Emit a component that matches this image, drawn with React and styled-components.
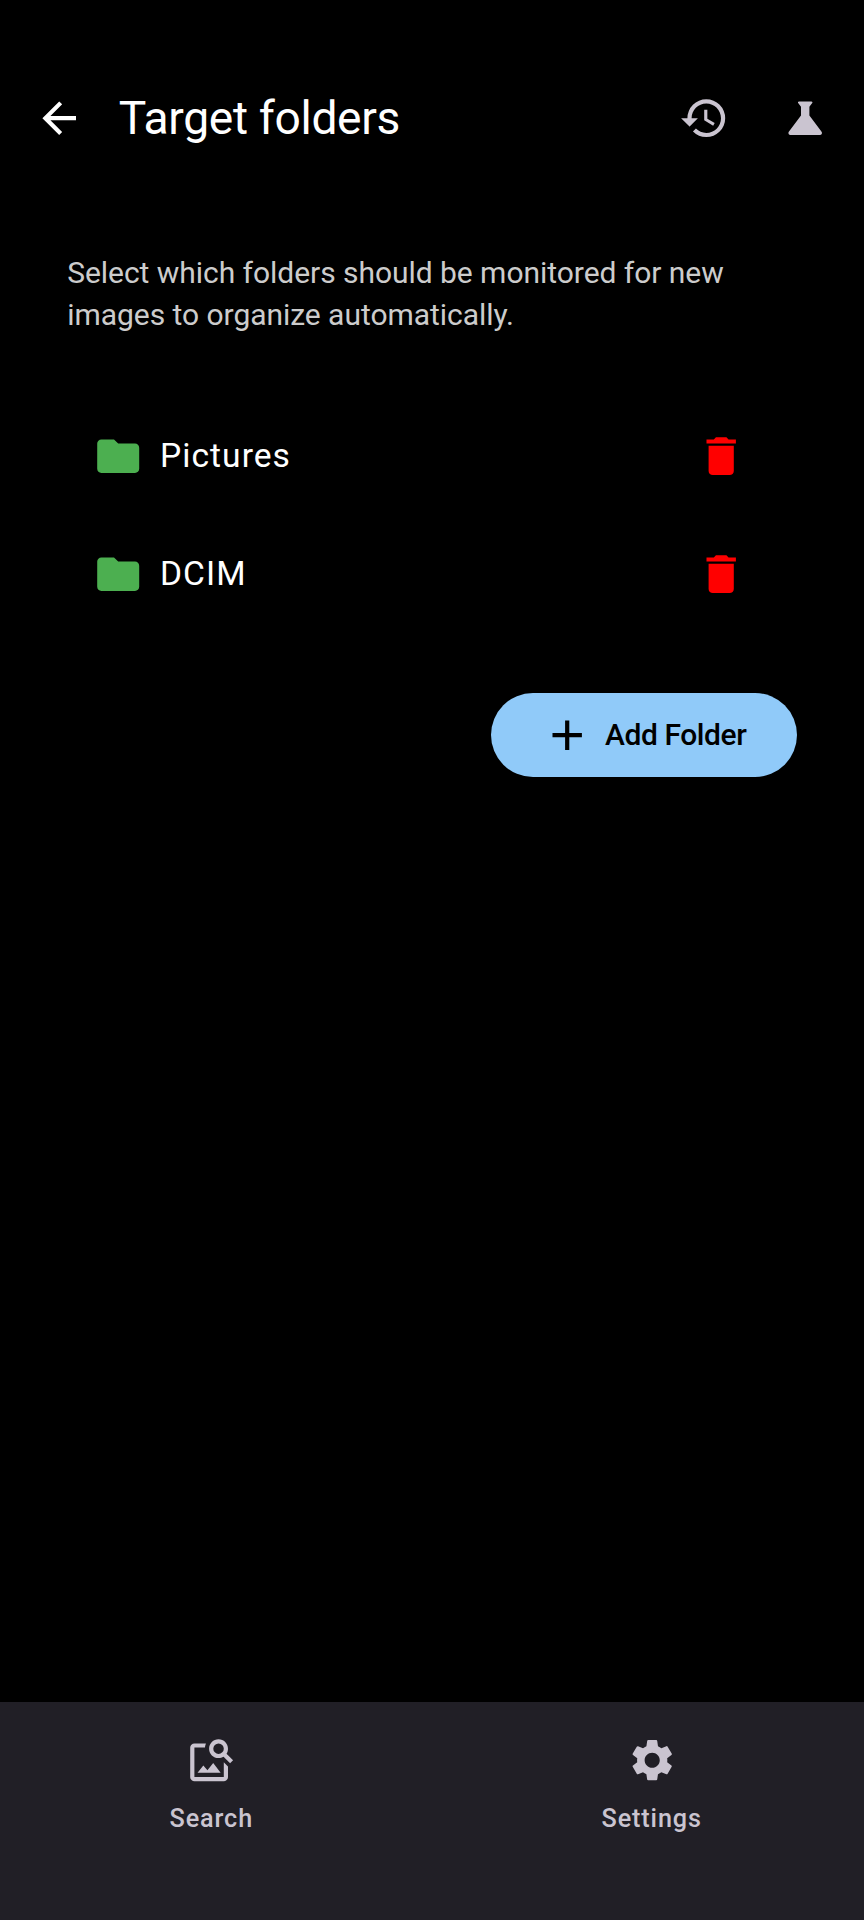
import React from 'react';
import styled, { createGlobalStyle } from 'styled-components';
import {
  MdArrowBack, MdHistory, MdScience, MdFolder, MdDelete, MdAdd, MdImageSearch, MdSettings,
} from 'react-icons/md';

const GlobalStyle = createGlobalStyle`
  * { box-sizing: border-box; }
  body { margin: 0; background: #000; font-family: Roboto, sans-serif; }
  button { font: inherit; border: 0; background: none; padding: 0; margin: 0; color: inherit; }
  svg { display: block; width: 50.4px; height: 50.4px; flex: none; }
`;

const Screen = styled.div`
  display: flex;
  flex-direction: column;
  width: 864px;
  height: 1920px;
  background: #000;
  color: #fff;
`;

const TopBar = styled.header`
  display: flex;
  align-items: center;
  height: 134.4px;
  margin-top: 50.8px;
  padding: 0 8.4px 0 9px;
`;

const IconButton = styled.button`
  display: flex;
  align-items: center;
  justify-content: center;
  width: 100.8px;
  height: 100.8px;
  color: ${({ $color }) => $color || '#fff'};
`;

const Title = styled.h1`
  flex: 1;
  margin: 0 0 0 9px;
  font-size: 46.2px;
  line-height: 58.8px;
  font-weight: 400;
  letter-spacing: -0.34px;
`;

const Content = styled.main`
  flex: 1;
  display: flex;
  flex-direction: column;
  padding: 67px 67.2px 0;
`;

const Description = styled.p`
  margin: 0;
  font-size: 30px;
  line-height: 42px;
  letter-spacing: -0.04px;
  color: #ccc;
`;

const FolderList = styled.ul`
  list-style: none;
  margin: 61.2px 0 0;
  padding: 0;
`;

const FolderRow = styled.li`
  display: flex;
  align-items: center;
  height: 118.2px;
  padding: 0 25.2px 0 26px;
  color: #4caf50;
`;

const FolderName = styled.span`
  flex: 1;
  margin-left: 16.4px;
  font-size: 33.6px;
  line-height: 50.4px;
  letter-spacing: 1.05px;
  color: #fff;
`;

const AddButton = styled.button`
  align-self: flex-end;
  display: flex;
  align-items: center;
  gap: 12.6px;
  height: 84px;
  margin-top: 59px;
  padding: 0 50.4px 0 51px;
  border-radius: 42px;
  background: #90caf9;
  color: #000;
  font-size: 30px;
  font-weight: 500;
  letter-spacing: -0.42px;
`;

const BottomNav = styled.nav`
  display: flex;
  gap: 16.8px;
  height: 218px;
  background: #211f26;
`;

const NavItem = styled.button`
  flex: 1;
  display: flex;
  flex-direction: column;
  align-items: center;
  gap: 16.8px;
  padding: 32.8px 1px 0 0;
  color: #cac4d0;
  font-size: 25.2px;
  line-height: 33.6px;
  font-weight: 500;
  letter-spacing: 0.9px;
`;

const folders = ['Pictures', 'DCIM'];

export default function App() {
  return (
    <Screen>
      <GlobalStyle />
      <TopBar>
        <IconButton aria-label="Back"><MdArrowBack /></IconButton>
        <Title>Target folders</Title>
        <IconButton $color="#cac4d0" aria-label="History"><MdHistory /></IconButton>
        <IconButton $color="#cac4d0" aria-label="Experiments"><MdScience /></IconButton>
      </TopBar>
      <Content>
        <Description>
          Select which folders should be monitored for new images to organize automatically.
        </Description>
        <FolderList>
          {folders.map((name) => (
            <FolderRow key={name}>
              <MdFolder />
              <FolderName>{name}</FolderName>
              <IconButton $color="#f00" aria-label={`Remove ${name}`}><MdDelete /></IconButton>
            </FolderRow>
          ))}
        </FolderList>
        <AddButton><MdAdd />Add Folder</AddButton>
      </Content>
      <BottomNav>
        <NavItem><MdImageSearch />Search</NavItem>
        <NavItem><MdSettings />Settings</NavItem>
      </BottomNav>
    </Screen>
  );
}
